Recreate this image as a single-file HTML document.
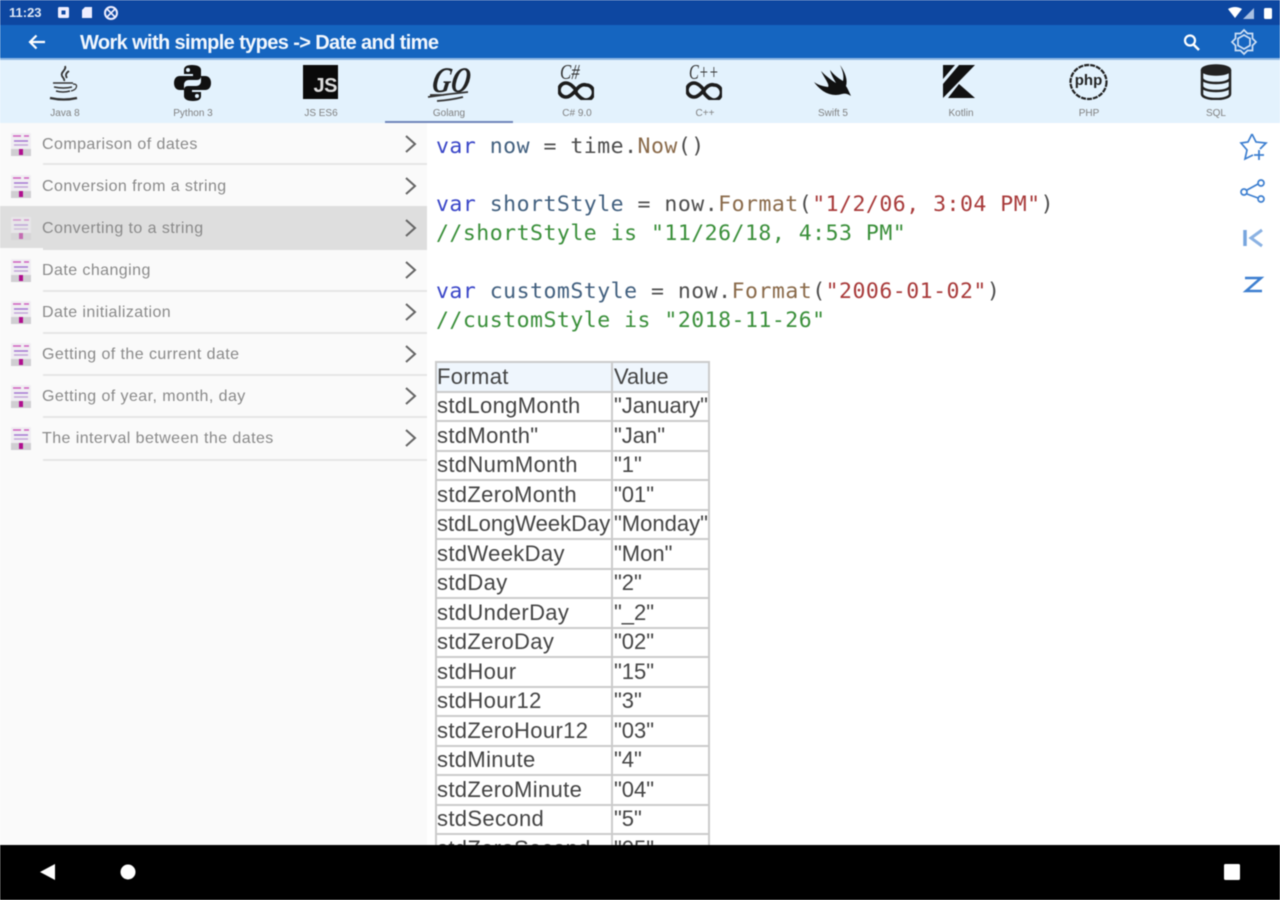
<!DOCTYPE html>
<html><head><meta charset="utf-8"><style>
html,body{margin:0;padding:0;width:1280px;height:900px;overflow:hidden;background:#fff;font-family:"Liberation Sans",sans-serif}
div,span,svg{position:absolute}
#r{left:0;top:0;width:1280px;height:900px;overflow:hidden;filter:blur(.5px);background:#fff}
.t{white-space:nowrap}
.tab{top:107px;width:80px;text-align:center;font-size:10px;color:#808080;line-height:13px}
.li{left:42px;margin-top:1px;font-size:16px;letter-spacing:.43px;color:#8a8a8a;line-height:20px;white-space:nowrap}
.sep{left:43px;width:384px;height:2px;background:#e6e6e6}
.code{left:436px;margin-top:1px;font-family:"DejaVu Sans Mono","Liberation Mono",monospace;font-size:21.5px;letter-spacing:.49px;line-height:29px;white-space:pre;color:#4d4d4d}
.k{position:static;color:#3a46c8}.v{position:static;color:#42607f}.f{position:static;color:#8a6a4a}.s{position:static;color:#a83a3a}
.g{color:#3a8f3a}
.hl{height:2px;left:435px;width:275px;background:#cbcbcb}
.c{font-size:22px;letter-spacing:.35px;line-height:29px;color:#444;white-space:nowrap}
</style></head><body><div id="r">
<div style="left:0;top:0;width:1280px;height:25px;background:#0d47a1"></div>
<div style="left:0;top:25px;width:1280px;height:33px;background:#1565c0"></div>
<div style="left:0;top:58px;width:1280px;height:2px;background:#8fb8e4"></div>
<div style="left:0;top:60px;width:1280px;height:63px;background:#e3f2fd"></div>
<div style="left:0;top:123px;width:427px;height:722px;background:#fafafa"></div>

<div class="t" style="left:9px;top:5px;font-size:13px;line-height:15px;color:#dfe8f5;font-weight:bold">11:23</div>
<svg style="left:56px;top:5px" width="64" height="16" viewBox="0 0 64 16"><rect x="2" y="2" width="11" height="11" rx="1.500" fill="#eef"/><rect x="5.500" y="5.500" width="4" height="4" fill="#0d47a1"/><path d="M26 5l3-3h7v11H26z" fill="#eef"/><circle cx="55" cy="8" r="6" fill="none" stroke="#eef" stroke-width="2"/><path d="M51 4l8 8M59 4l-8 8" stroke="#eef" stroke-width="1.600"/></svg>
<svg style="left:1226px;top:4px" width="50" height="18" viewBox="0 0 50 18"><path d="M2 5q7-4 14 0l-7 9z" fill="#fff"/><path d="M28 4v11H17z" fill="#a9c0e2"/><rect x="38" y="4" width="8" height="11" rx="1.500" fill="#fff"/></svg>

<svg style="left:26px;top:31px" width="22" height="22" viewBox="0 0 22 22"><path d="M19 11H4M10.500 4.500L4 11l6.500 6.500" fill="none" stroke="#fff" stroke-width="2.200"/></svg>
<div class="t" style="left:80px;top:32px;font-size:20px;line-height:23px;color:#f2f7fd;font-weight:bold;letter-spacing:-.62px">Work with simple types -&gt; Date and time</div>
<svg style="left:1180px;top:31px" width="22" height="22" viewBox="0 0 22 22"><circle cx="10" cy="9.500" r="5" fill="none" stroke="#fff" stroke-width="2.200"/><path d="M13.500 13.500L19 19" stroke="#fff" stroke-width="2.500"/></svg>
<svg style="left:1230px;top:28px" width="28" height="28" viewBox="0 0 28 28" fill="none" stroke="#cfe0f5" stroke-width="1.700"><path d="M14 2l3.500 3.500h5v5L26 14l-3.500 3.500v5h-5L14 26l-3.500-3.500h-5v-5L2 14l3.500-3.500v-5h5z"/><path d="M14 7l6 3.500v7L14 21l-6-3.500v-7z"/></svg>

<!-- tabs -->
<svg style="left:46px;top:64px" width="36" height="40" viewBox="0 0 36 40" fill="none" stroke="#333"><path d="M19 2c2 4-5 6-3 10 1 2 3 3 2 5M23 7c-3 2-4 4-2 7" stroke-width="1.800"/><path d="M7 19h20M8 23q10 2 18 0M10 27q7 2 14 0" stroke-width="1.500"/><path d="M27 20q5 0 3 4-1 2-5 3" stroke-width="1.200"/><path d="M4 34q14 3 27 0" stroke-width="2.200"/></svg>
<svg style="left:174px;top:65px" width="37" height="36" viewBox="0 0 37 36" fill="#111"><path d="M18 0c-6 0-8 2-8 5v4h9v2H6c-4 0-6 3-6 7s2 7 6 7h4v-5c0-3 2-5 5-5h8c3 0 4-2 4-4V5c0-3-3-5-9-5zm-4 3a2 2 0 110 4 2 2 0 010-4z"/><path d="M19 36c6 0 8-2 8-5v-4h-9v-2h13c4 0 6-3 6-7s-2-7-6-7h-4v5c0 3-2 5-5 5h-8c-3 0-4 2-4 4v6c0 3 3 5 9 5zm4-3a2 2 0 110-4 2 2 0 010 4z"/></svg>
<div style="left:303px;top:65px;width:35px;height:34px;background:#0a0a0a"></div>
<div class="t" style="left:303px;top:74px;width:34px;text-align:right;font-size:20px;line-height:24px;font-weight:bold;color:#ddd;letter-spacing:-.5px">JS</div>
<div class="t" style="left:433px;top:62px;font-size:36px;line-height:36px;font-weight:bold;font-style:italic;font-family:'Liberation Serif',serif;color:#222;transform:scaleX(.72) skewX(-14deg);transform-origin:left">GO</div>
<svg style="left:425px;top:90px" width="46" height="14" viewBox="0 0 46 14" fill="none" stroke="#333"><path d="M3 7q20-3 40-5M12 11q14-1 26-4M5 5h14" stroke-width="1.800"/></svg>

<div class="t" style="left:560px;top:61px;font:italic 21px/22px 'Liberation Serif',serif;color:#333;transform:scaleX(.8);transform-origin:left">C#</div>
<svg style="left:558px;top:81px" width="36" height="19" viewBox="0 0 36 19" fill="none" stroke="#1c1c1c" stroke-width="3.600"><path d="M18 9c-4-5-7-7-10-7a7 7 0 000 14c3 0 6-2 10-7s7-6 10-5a7 7 0 010 15c-3 0-6-2-10-7z"/></svg>
<div class="t" style="left:689px;top:61px;font:italic 21px/22px 'Liberation Serif',serif;color:#333;transform:scaleX(.7);transform-origin:left">C++</div>
<svg style="left:686px;top:81px" width="36" height="19" viewBox="0 0 36 19" fill="none" stroke="#1c1c1c" stroke-width="3.600"><path d="M18 9c-4-5-7-7-10-7a7 7 0 000 14c3 0 6-2 10-7s7-6 10-5a7 7 0 010 15c-3 0-6-2-10-7z"/></svg>
<svg style="left:813px;top:64px" width="40" height="34" viewBox="0 0 40 34" fill="#111"><path d="M27 1c5 7 8 15 6 21 2 3 3 6 5 10-3-2-6-3-9-2-6 2-13 1-19-3-4-3-7-6-9-9 4 3 8 4 14 5C17 21 12 15 8 7c5 5 10 9 15 12-3-5-5-9-6-13 4 5 8 8 13 11 1-5 0-10-3-16z"/></svg>
<svg style="left:942px;top:64px" width="34" height="36" viewBox="0 0 34 36" fill="#111"><path d="M1 1h12L1 15z"/><path d="M17 1h16L1 34V20z"/><path d="M17 20L33 34H6z"/></svg>
<svg style="left:1068px;top:63px" width="41" height="38" viewBox="0 0 41 38"><ellipse cx="20.500" cy="19" rx="18" ry="17" fill="none" stroke="#222" stroke-width="2.200" stroke-dasharray="5 1"/></svg>
<div class="t" style="left:1068px;top:71px;width:41px;text-align:center;font-size:15px;line-height:20px;font-weight:bold;color:#222">php</div>
<svg style="left:1199px;top:64px" width="34" height="36" viewBox="0 0 34 36" fill="none" stroke="#222" stroke-width="2.500"><ellipse cx="17" cy="6" rx="14" ry="4.500" fill="#222"/><path d="M3 6v24c0 3 6 5 14 5s14-2 14-5V6M3 14c0 3 6 5 14 5s14-2 14-5M3 22c0 3 6 5 14 5s14-2 14-5"/></svg>

<div class="tab" style="left:25px">Java 8</div>
<div class="tab" style="left:153px">Python 3</div>
<div class="tab" style="left:281px">JS ES6</div>
<div class="tab" style="left:409px">Golang</div>
<div class="tab" style="left:537px">C# 9.0</div>
<div class="tab" style="left:665px">C++</div>
<div class="tab" style="left:793px">Swift 5</div>
<div class="tab" style="left:921px">Kotlin</div>
<div class="tab" style="left:1049px">PHP</div>
<div class="tab" style="left:1176px">SQL</div>
<div style="left:385px;top:121px;width:128px;height:2px;background:#6f86bb"></div>

<!-- list -->
<div style="left:0;top:206px;width:427px;height:44px;background:#dedede"></div>
<div style="left:0;top:248px;width:43px;height:2px;background:#fafafa"></div>
<div class="sep" style="top:163px"></div>
<div class="sep" style="top:290px"></div>
<div class="sep" style="top:332px"></div>
<div class="sep" style="top:374px"></div>
<div class="sep" style="top:416px"></div>
<div class="sep" style="top:459px"></div>
<div class="li" style="top:134px">Comparison of dates</div>
<div class="li" style="top:176px">Conversion from a string</div>
<div class="li" style="top:218px">Converting to a string</div>
<div class="li" style="top:260px">Date changing</div>
<div class="li" style="top:302px">Date initialization</div>
<div class="li" style="top:344px">Getting of the current date</div>
<div class="li" style="top:386px">Getting of year, month, day</div>
<div class="li" style="top:428px">The interval between the dates</div>

<svg style="left:0;top:130px" width="427" height="330" viewBox="0 0 427 330">
<defs><g id="d"><rect x="11" y="3" width="20" height="23" rx="1" fill="#f0eef2"/><path d="M13 6h8M24 6h5" stroke="#d060c0" stroke-width="1.500"/><path d="M14 11h14" stroke="#a070d0" stroke-width="1.400"/><path d="M14 15h14" stroke="#c0a0d8" stroke-width="1.400"/><rect x="11" y="19" width="20" height="7" fill="#d0ced2"/><rect x="19" y="19" width="4" height="6" fill="#b0108f"/></g><path id="a" d="M406 6l9 8-9 8" fill="none" stroke="#666" stroke-width="2"/></defs>
<use href="#d"/><use href="#d" y="42"/><use href="#d" y="84" opacity=".55"/><use href="#d" y="126"/><use href="#d" y="168"/><use href="#d" y="210"/><use href="#d" y="252"/><use href="#d" y="294"/>
<use href="#a"/><use href="#a" y="42"/><use href="#a" y="84"/><use href="#a" y="126"/><use href="#a" y="168"/><use href="#a" y="210"/><use href="#a" y="252"/><use href="#a" y="294"/>
</svg>

<!-- code -->
<div class="code" style="top:131px"><span class="k">var</span> <span class="v">now</span> = time.<span class="f">Now</span>()</div>
<div class="code" style="top:189px"><span class="k">var</span> <span class="v">shortStyle</span> = now.<span class="f">Format</span>(<span class="s">"1/2/06, 3:04 PM"</span>)</div>
<div class="code g" style="top:218px">//shortStyle is "11/26/18, 4:53 PM"</div>
<div class="code" style="top:276px"><span class="k">var</span> <span class="v">customStyle</span> = now.<span class="f">Format</span>(<span class="s">"2006-01-02"</span>)</div>
<div class="code g" style="top:305px">//customStyle is "2018-11-26"</div>

<!-- right icons -->
<svg style="left:1236px;top:130px" width="34" height="170" viewBox="0 0 34 170" fill="none" stroke="#3d7fd0" stroke-width="1.700"><path d="M16 4l4 8 10 1-6 6M16 4l-4 8-7 1 6 7-2 9 8-4"/><path d="M23 20v10M18 25h10" stroke-width="1.800"/><circle cx="8" cy="62" r="3"/><circle cx="25" cy="53" r="3"/><circle cx="25" cy="69" r="3"/><path d="M11 60l11-6M11 64l11 4"/><path d="M9 100v16" stroke-width="3.500" opacity=".7"/><path d="M26 100l-11 8 11 8" stroke-width="3" opacity=".6"/><path d="M9 148h16L10 161h16" stroke-width="2.500"/></svg>

<!-- table -->
<div style="left:436px;top:362px;width:273px;height:29px;background:#eff6fd"></div>
<div class="hl" style="top:361px"></div>
<div class="hl" style="top:391px"></div>
<div class="hl" style="top:420px"></div>
<div class="hl" style="top:450px"></div>
<div class="hl" style="top:479px"></div>
<div class="hl" style="top:509px"></div>
<div class="hl" style="top:538px"></div>
<div class="hl" style="top:568px"></div>
<div class="hl" style="top:597px"></div>
<div class="hl" style="top:627px"></div>
<div class="hl" style="top:656px"></div>
<div class="hl" style="top:686px"></div>
<div class="hl" style="top:715px"></div>
<div class="hl" style="top:745px"></div>
<div class="hl" style="top:774px"></div>
<div class="hl" style="top:804px"></div>
<div class="hl" style="top:833px"></div>
<div style="left:435px;top:361px;width:2px;height:484px;background:#cbcbcb"></div>
<div style="left:611px;top:361px;width:2px;height:484px;background:#cbcbcb"></div>
<div style="left:708px;top:361px;width:2px;height:484px;background:#cbcbcb"></div>

<div class="c" style="left:437px;top:362px">Format</div><div class="c" style="left:614px;top:362px;letter-spacing:0">Value</div>
<div class="c" style="left:437px;top:391px">stdLongMonth</div><div class="c" style="left:614px;top:391px;letter-spacing:0">"January"</div>
<div class="c" style="left:437px;top:421px">stdMonth"</div><div class="c" style="left:614px;top:421px;letter-spacing:0">"Jan"</div>
<div class="c" style="left:437px;top:450px">stdNumMonth</div><div class="c" style="left:614px;top:450px;letter-spacing:0">"1"</div>
<div class="c" style="left:437px;top:480px">stdZeroMonth</div><div class="c" style="left:614px;top:480px;letter-spacing:0">"01"</div>
<div class="c" style="left:437px;top:509px;letter-spacing:0">stdLongWeekDay</div><div class="c" style="left:614px;top:509px;letter-spacing:0">"Monday"</div>
<div class="c" style="left:437px;top:539px">stdWeekDay</div><div class="c" style="left:614px;top:539px;letter-spacing:0">"Mon"</div>
<div class="c" style="left:437px;top:568px">stdDay</div><div class="c" style="left:614px;top:568px;letter-spacing:0">"2"</div>
<div class="c" style="left:437px;top:598px">stdUnderDay</div><div class="c" style="left:614px;top:598px;letter-spacing:0">"_2"</div>
<div class="c" style="left:437px;top:627px">stdZeroDay</div><div class="c" style="left:614px;top:627px;letter-spacing:0">"02"</div>
<div class="c" style="left:437px;top:657px">stdHour</div><div class="c" style="left:614px;top:657px;letter-spacing:0">"15"</div>
<div class="c" style="left:437px;top:686px">stdHour12</div><div class="c" style="left:614px;top:686px;letter-spacing:0">"3"</div>
<div class="c" style="left:437px;top:716px">stdZeroHour12</div><div class="c" style="left:614px;top:716px;letter-spacing:0">"03"</div>
<div class="c" style="left:437px;top:745px">stdMinute</div><div class="c" style="left:614px;top:745px;letter-spacing:0">"4"</div>
<div class="c" style="left:437px;top:775px">stdZeroMinute</div><div class="c" style="left:614px;top:775px;letter-spacing:0">"04"</div>
<div class="c" style="left:437px;top:804px">stdSecond</div><div class="c" style="left:614px;top:804px;letter-spacing:0">"5"</div>
<div class="c" style="left:437px;top:834px">stdZeroSecond</div><div class="c" style="left:614px;top:834px;letter-spacing:0">"05"</div>

<!-- nav -->
<div style="left:0;top:845px;width:1280px;height:55px;background:#000"></div>
<svg style="left:30px;top:855px" width="1220" height="34" viewBox="0 0 1220 34" fill="#fff"><path d="M25 9v16L10 17z"/><circle cx="98" cy="17" r="7.500"/><rect x="1194" y="9" width="16" height="16" rx="1.500"/></svg>
</div></body></html>
